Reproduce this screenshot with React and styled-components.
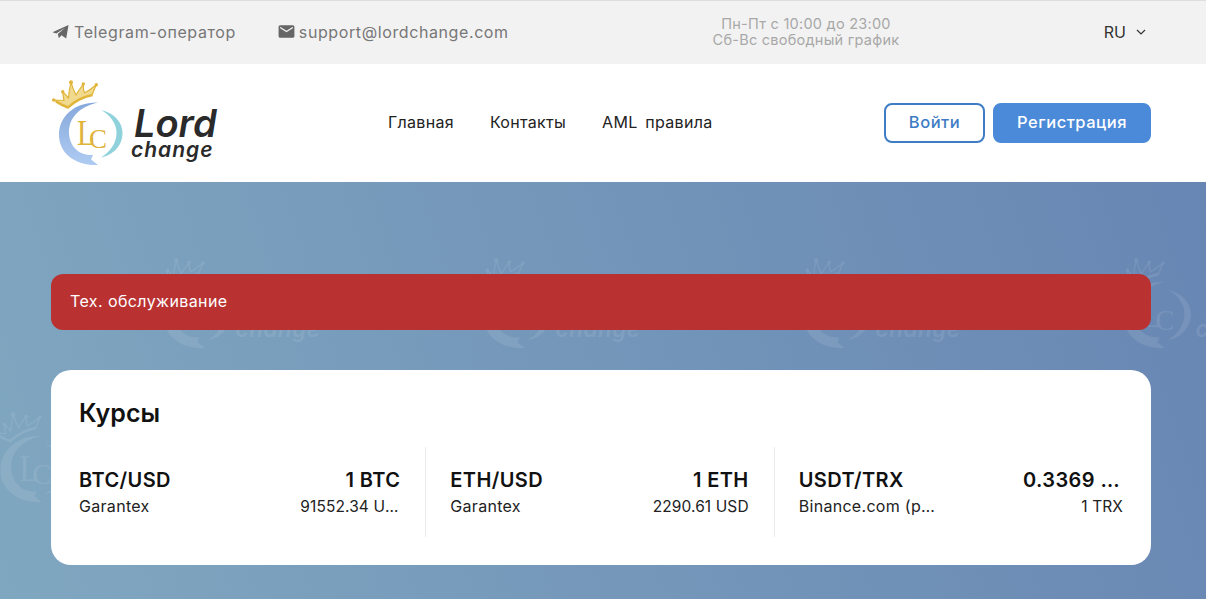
import React from "react";
import styled, { createGlobalStyle } from "styled-components";
import { MdEmail } from "react-icons/md";

const GlobalStyle = createGlobalStyle`
  html, body {
    margin: 0;
    padding: 0;
    background: #fff;
    font-family: "Inter", "Open Sans", sans-serif;
  }
  * {
    box-sizing: border-box;
  }
`;

const rates = [
  { pair: "BTC/USD", source: "Garantex", give: "1 BTC", get: "91552.34 USD", width: 322 },
  { pair: "ETH/USD", source: "Garantex", give: "1 ETH", get: "2290.61 USD", width: 299 },
  { pair: "USDT/TRX", source: "Binance.com (p2p)", give: "0.3369 USDT", get: "1 TRX", width: 325 },
];

// where the faint logo shows on the blue background, x and y from the hero's corner
const marks = [
  [155, 76], [475, 76], [795, 76], [1115, 76],
  [-8, 230],
];

// crown + two crescents + LC, same shapes for the header logo and the background mark
const LogoMark = ({ mono }) => (
  <>
    <g stroke={mono ? "#fff" : "#e0b53a"} fill={mono ? "none" : "#f1da8e"} strokeWidth="1.2" strokeLinejoin="round">
      <path d="M2.7 20 Q9 20 13 20.5 Q12 16 11.7 11.7 Q15 15 17.5 18 Q18 10 20 2.3 Q22 9 25 15 Q28 10 32.3 4 Q32 9 33.5 13 Q39 10 45.3 4.7 Q43 10 41 15 Q28 17 17 27 Q10 24 2.7 20 Z" />
    </g>
    <path d="M5 21.5 Q11 25.5 17 27.5 Q27 18 41.5 15" fill="none" stroke={mono ? "#fff" : "#e0b53a"} strokeWidth="2.4" />
    <g fill={mono ? "#fff" : "#e0b53a"}>
      <circle cx="2.7" cy="20" r="1.7" />
      <circle cx="11.7" cy="11.7" r="1.7" />
      <circle cx="20" cy="2.3" r="2" />
      <circle cx="32.3" cy="4" r="1.7" />
      <circle cx="45.3" cy="4.7" r="1.7" />
    </g>
    <path
      fill={mono ? "#fff" : "url(#lcBlue)"}
      d="M46.7 22.5 C24 22 8 36 8 55 C8 73 24 86 47 85 L40 79.5 L42 75 C28 76 18 66 18 52 C18 38 28 27 46.7 22.5 Z"
    />
    <path
      fill={mono ? "#fff" : "#8fd2dc"}
      d="M50 30 C64 33 71.5 43 71.5 53 C71.5 66 62 75 50 77.5 C59 72 65.5 63 65.5 53 C65.5 43 59 35 50 30 Z"
    />
    <g fill={mono ? "#fff" : "#dfb43c"} fontFamily="'Liberation Serif', serif">
      <text x="26" y="65" fontSize="36" textLength="18" lengthAdjust="spacingAndGlyphs">L</text>
      <text x="38" y="68" fontSize="27">C</text>
    </g>
  </>
);

const Logo = () => (
  <LogoLink>
    <LogoIcon viewBox="0 0 72 88">
      <defs>
        <linearGradient id="lcBlue" x1="0" y1="0" x2="0" y2="1">
          <stop offset="0" stopColor="#86a8db" />
          <stop offset="1" stopColor="#aecbf2" />
        </linearGradient>
      </defs>
      <LogoMark />
    </LogoIcon>
    <LogoWords>
      <LogoLord>Lord</LogoLord>
      <LogoChange>change</LogoChange>
    </LogoWords>
  </LogoLink>
);

const Watermark = () => (
  <WatermarkLayer aria-hidden="true">
    {marks.map(([x, y]) => (
      <g key={`${x}-${y}`} transform={`translate(${x} ${y}) scale(1.06)`} opacity="0.09">
        <LogoMark mono />
        <text x="76" y="75" fontSize="21" letterSpacing="0.6" fill="#fff" fontFamily="Inter, sans-serif" fontStyle="italic" fontWeight="600">change</text>
      </g>
    ))}
  </WatermarkLayer>
);

const App = () => {
  return (
    <Page>
      <GlobalStyle />
      <TopBar>
        <Container>
          <TopLinks>
            <TopLink $gap={5}>
              <svg width="17" height="15" viewBox="0 0 15 14" fill="#666">
                <path d="M0 7.6 L15 1 L12.8 13.6 L8.4 10.6 L6 13.4 L5 9.4 L11.8 3.6 L3.6 8.8 Z" />
              </svg>
              Telegram-оператор
            </TopLink>
            <TopLink $gap={3}>
              <MdEmail size={19} color="#666" />
              support@lordchange.com
            </TopLink>
          </TopLinks>
          <Hours>
            <div>Пн-Пт с 10:00 до 23:00</div>
            <div>Сб-Вс свободный график</div>
          </Hours>
          <Lang>
            RU
            <svg width="10" height="6" viewBox="0 0 10 6" fill="none" stroke="#333" strokeWidth="1.2">
              <path d="M1 1 L5 5 L9 1" />
            </svg>
          </Lang>
        </Container>
      </TopBar>

      <Header>
        <Container>
          <Logo />
          <Nav>
            <NavLink>Главная</NavLink>
            <NavLink>Контакты</NavLink>
            <NavLink>AML правила</NavLink>
          </Nav>
          <Buttons>
            <Button $outline>Войти</Button>
            <Button>Регистрация</Button>
          </Buttons>
        </Container>
      </Header>

      <Hero>
        <Watermark />
        <HeroInner>
          <Alert>Тех. обслуживание</Alert>
          <Card>
            <CardTitle>Курсы</CardTitle>
            <RatesRow>
              {rates.map((r) => (
                <RateCell key={r.pair} $width={r.width}>
                  <RateLine>
                    <RatePair>{r.pair}</RatePair>
                    <RateGive>{r.give}</RateGive>
                  </RateLine>
                  <RateLine>
                    <RateSource>{r.source}</RateSource>
                    <RateGet>{r.get}</RateGet>
                  </RateLine>
                </RateCell>
              ))}
            </RatesRow>
          </Card>
        </HeroInner>
      </Hero>
    </Page>
  );
};

// Styled Components

const Page = styled.div`
  height: 599px;
  overflow: hidden;
`;

const Container = styled.div`
  width: 1100px;
  margin-left: 51px;
  display: flex;
  align-items: center;
  height: 100%;
`;

const TopBar = styled.div`
  height: 64px;
  padding-bottom: 2px;
  background: #f2f2f2;
  border-top: 1px solid #dedede;
`;

const TopLinks = styled.div`
  display: flex;
  gap: 41px;
  width: 600px;
  padding-left: 1px;
`;

const TopLink = styled.div`
  display: flex;
  align-items: center;
  gap: ${(p) => p.$gap}px;
  font-size: 16px;
  letter-spacing: 0.6px;
  color: #777;
`;

const Hours = styled.div`
  width: 310px;
  text-align: center;
  font-size: 14.5px;
  letter-spacing: 0.25px;
  line-height: 16px;
  color: #a8a8a8;
`;

const Lang = styled.div`
  margin-left: auto;
  margin-right: 5px;
  display: flex;
  align-items: center;
  gap: 10px;
  font-size: 16px;
  color: #333;
`;

const Header = styled.div`
  height: 118px;
  background: #fff;
`;

const LogoLink = styled.div`
  display: flex;
  align-items: flex-start;
  height: 100%;
  padding-top: 16px;
`;

const LogoIcon = styled.svg`
  width: 72px;
  height: 88px;
  flex-shrink: 0;
  overflow: visible;
`;

const LogoWords = styled.div`
  margin: 25px 0 0 8px;
  width: 90px;
  color: #2a2a2a;
  font-style: italic;
  font-weight: 600;
`;

const LogoLord = styled.div`
  font-size: 38px;
  line-height: 36px;
  margin-left: 3px;
`;

const LogoChange = styled.div`
  font-size: 21px;
  letter-spacing: 1px;
  line-height: 18px;
`;

const Nav = styled.nav`
  display: flex;
  gap: 36px;
  margin-left: 167px;
  padding-bottom: 2px;
`;

const NavLink = styled.a`
  font-size: 16px;
  letter-spacing: 0.3px;
  word-spacing: 3px;
  color: #222;
`;

const Buttons = styled.div`
  margin-left: auto;
  display: flex;
  gap: 8px;
`;

const Button = styled.button`
  height: 40px;
  width: ${(p) => (p.$outline ? "101px" : "158px")};
  border-radius: 8px;
  border: 2px solid ${(p) => (p.$outline ? "#3e7cc4" : "#4a8ad8")};
  background: ${(p) => (p.$outline ? "#fff" : "#4a8ad8")};
  color: ${(p) => (p.$outline ? "#3e7cc4" : "#fff")};
  font-family: inherit;
  font-size: 16.5px;
  letter-spacing: 0.5px;
  font-weight: 500;
  padding: 0 0 2px;
`;

const Hero = styled.div`
  position: relative;
  height: 417px;
  background: linear-gradient(72deg, #80a7c0 0%, #6886b3 100%);
`;

const WatermarkLayer = styled.svg`
  position: absolute;
  inset: 0;
  width: 100%;
  height: 100%;
`;

const HeroInner = styled.div`
  position: relative;
  width: 1100px;
  margin-left: 51px;
  padding-top: 92px;
`;

const Alert = styled.div`
  height: 56px;
  display: flex;
  align-items: center;
  padding: 0 19px 2px;
  background: #b93131;
  border-radius: 12px;
  color: #fff;
  font-size: 16px;
  letter-spacing: 0.4px;
`;

const Card = styled.div`
  margin-top: 40px;
  height: 195px;
  background: #fff;
  border-radius: 20px;
  padding: 27px 28px 0;
`;

const CardTitle = styled.div`
  font-size: 25px;
  line-height: 32px;
  font-weight: 600;
  color: #111;
`;

const RatesRow = styled.div`
  display: flex;
  margin-top: 18px;
`;

const RateCell = styled.div`
  width: ${(p) => p.$width}px;
  box-sizing: content-box;
  height: 69px;
  padding: 21px 25px 0 24px;
  border-left: 1px solid #ececec;
  &:first-child {
    padding-left: 0;
    border-left: none;
  }
  &:last-child {
    padding-right: 0;
  }
`;

const RateLine = styled.div`
  display: flex;
  justify-content: space-between;
  align-items: baseline;
  margin-bottom: 4px;
`;

const RatePair = styled.div`
  font-size: 20px;
  letter-spacing: 0.4px;
  line-height: 24px;
  font-weight: 600;
  color: #111;
`;

const RateGive = styled(RatePair)`
  max-width: 100px;
  white-space: nowrap;
  overflow: hidden;
  text-overflow: ellipsis;
  text-align: right;
`;

const RateSource = styled.div`
  font-size: 16px;
  letter-spacing: 0.3px;
  line-height: 20px;
  color: #222;
  max-width: 138px;
  white-space: nowrap;
  overflow: hidden;
  text-overflow: ellipsis;
`;

const RateGet = styled(RateSource)`
  max-width: 100px;
  font-size: 15.5px;
  letter-spacing: 0.1px;
  text-align: right;
`;

export default App;
